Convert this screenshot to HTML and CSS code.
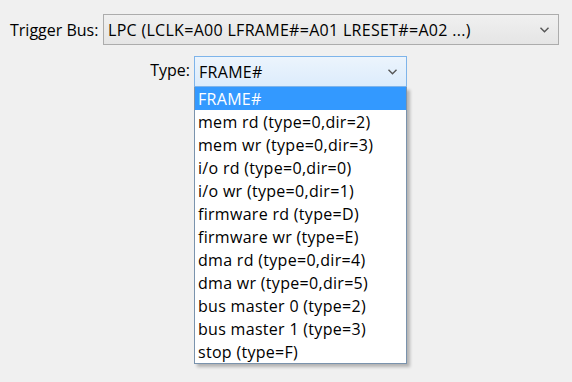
FILE: index.html
```html
<!DOCTYPE html>
<html lang="en">
  <head>
    <meta charset="UTF-8">
    <title>Trigger settings</title>
    <link rel="stylesheet" href="styles.css">
  </head>
  <body>
    <div class="panel">
      <div class="row bus-row">
        <label class="label">Trigger Bus:</label>
        <div class="combo bus-combo">
          <span class="combo-text">LPC (LCLK=A00 LFRAME#=A01 LRESET#=A02 ...)</span>
          <svg class="chevron" width="9" height="6" viewBox="0 0 9 6"><path d="M0.5 0.8 L4.5 4.8 L8.5 0.8" fill="none" stroke="#555" stroke-width="1.4"/></svg>
        </div>
      </div>
      <div class="row type-row">
        <label class="label type-label">Type:</label>
        <div class="type-wrap">
          <div class="combo type-combo">
            <span class="combo-text">FRAME#</span>
            <svg class="chevron" width="9" height="6" viewBox="0 0 9 6"><path d="M0.5 0.8 L4.5 4.8 L8.5 0.8" fill="none" stroke="#555" stroke-width="1.4"/></svg>
          </div>
          <ul class="dropdown">
            <li class="selected">FRAME#</li>
            <li>mem rd (type=0,dir=2)</li>
            <li>mem wr (type=0,dir=3)</li>
            <li>i/o rd (type=0,dir=0)</li>
            <li>i/o wr (type=0,dir=1)</li>
            <li>firmware rd (type=D)</li>
            <li>firmware wr (type=E)</li>
            <li>dma rd (type=0,dir=4)</li>
            <li>dma wr (type=0,dir=5)</li>
            <li>bus master 0 (type=2)</li>
            <li>bus master 1 (type=3)</li>
            <li>stop (type=F)</li>
          </ul>
        </div>
      </div>
    </div>
  </body>
</html>
```

FILE: styles.css
```css
html, body {
  margin: 0;
  height: 100%;
}

body {
  background: #f0f0f0;
  font-family: "Open Sans", "Noto Sans", sans-serif;
  font-size: 16px;
  color: #000;
}

.panel {
  padding: 14px 0 0 10px;
}

.row {
  display: flex;
  align-items: center;
}

.label {
  white-space: nowrap;
}

.bus-row .label {
  width: 93px;
}

.type-row {
  margin-top: 11px;
  align-items: flex-start;
}

.type-label {
  width: 184px;
  text-align: right;
  padding-right: 4px;
  box-sizing: border-box;
  line-height: 29px;
}

.combo {
  display: flex;
  align-items: center;
  justify-content: space-between;
  box-sizing: border-box;
  height: 31px;
  padding: 0 9px 0 4px;
  border: 1px solid #acacac;
  white-space: nowrap;
  letter-spacing: 0.3px;
}

.bus-combo {
  width: 456px;
  background: linear-gradient(#f0f0f0, #e5e5e5);
}

.type-wrap {
  position: relative;
}

.type-combo {
  width: 213px;
  border-color: #7eb4ea;
  background: linear-gradient(#ecf4fc, #dcecfc);
}

.chevron {
  flex: none;
}

.dropdown {
  position: absolute;
  top: 31px;
  left: 0;
  width: 211px;
  margin: 0;
  padding: 0;
  list-style: none;
  background: #fff;
  border: 1px solid #7a93ad;
  border-top: none;
  box-shadow: 3px 3px 3px rgba(0, 0, 0, 0.25);
}

.dropdown li {
  height: 23px;
  line-height: 24px;
  padding-left: 3px;
  white-space: nowrap;
  letter-spacing: 0.3px;
}

.dropdown li.selected {
  background: #3399ff;
  color: #fff;
}
```
